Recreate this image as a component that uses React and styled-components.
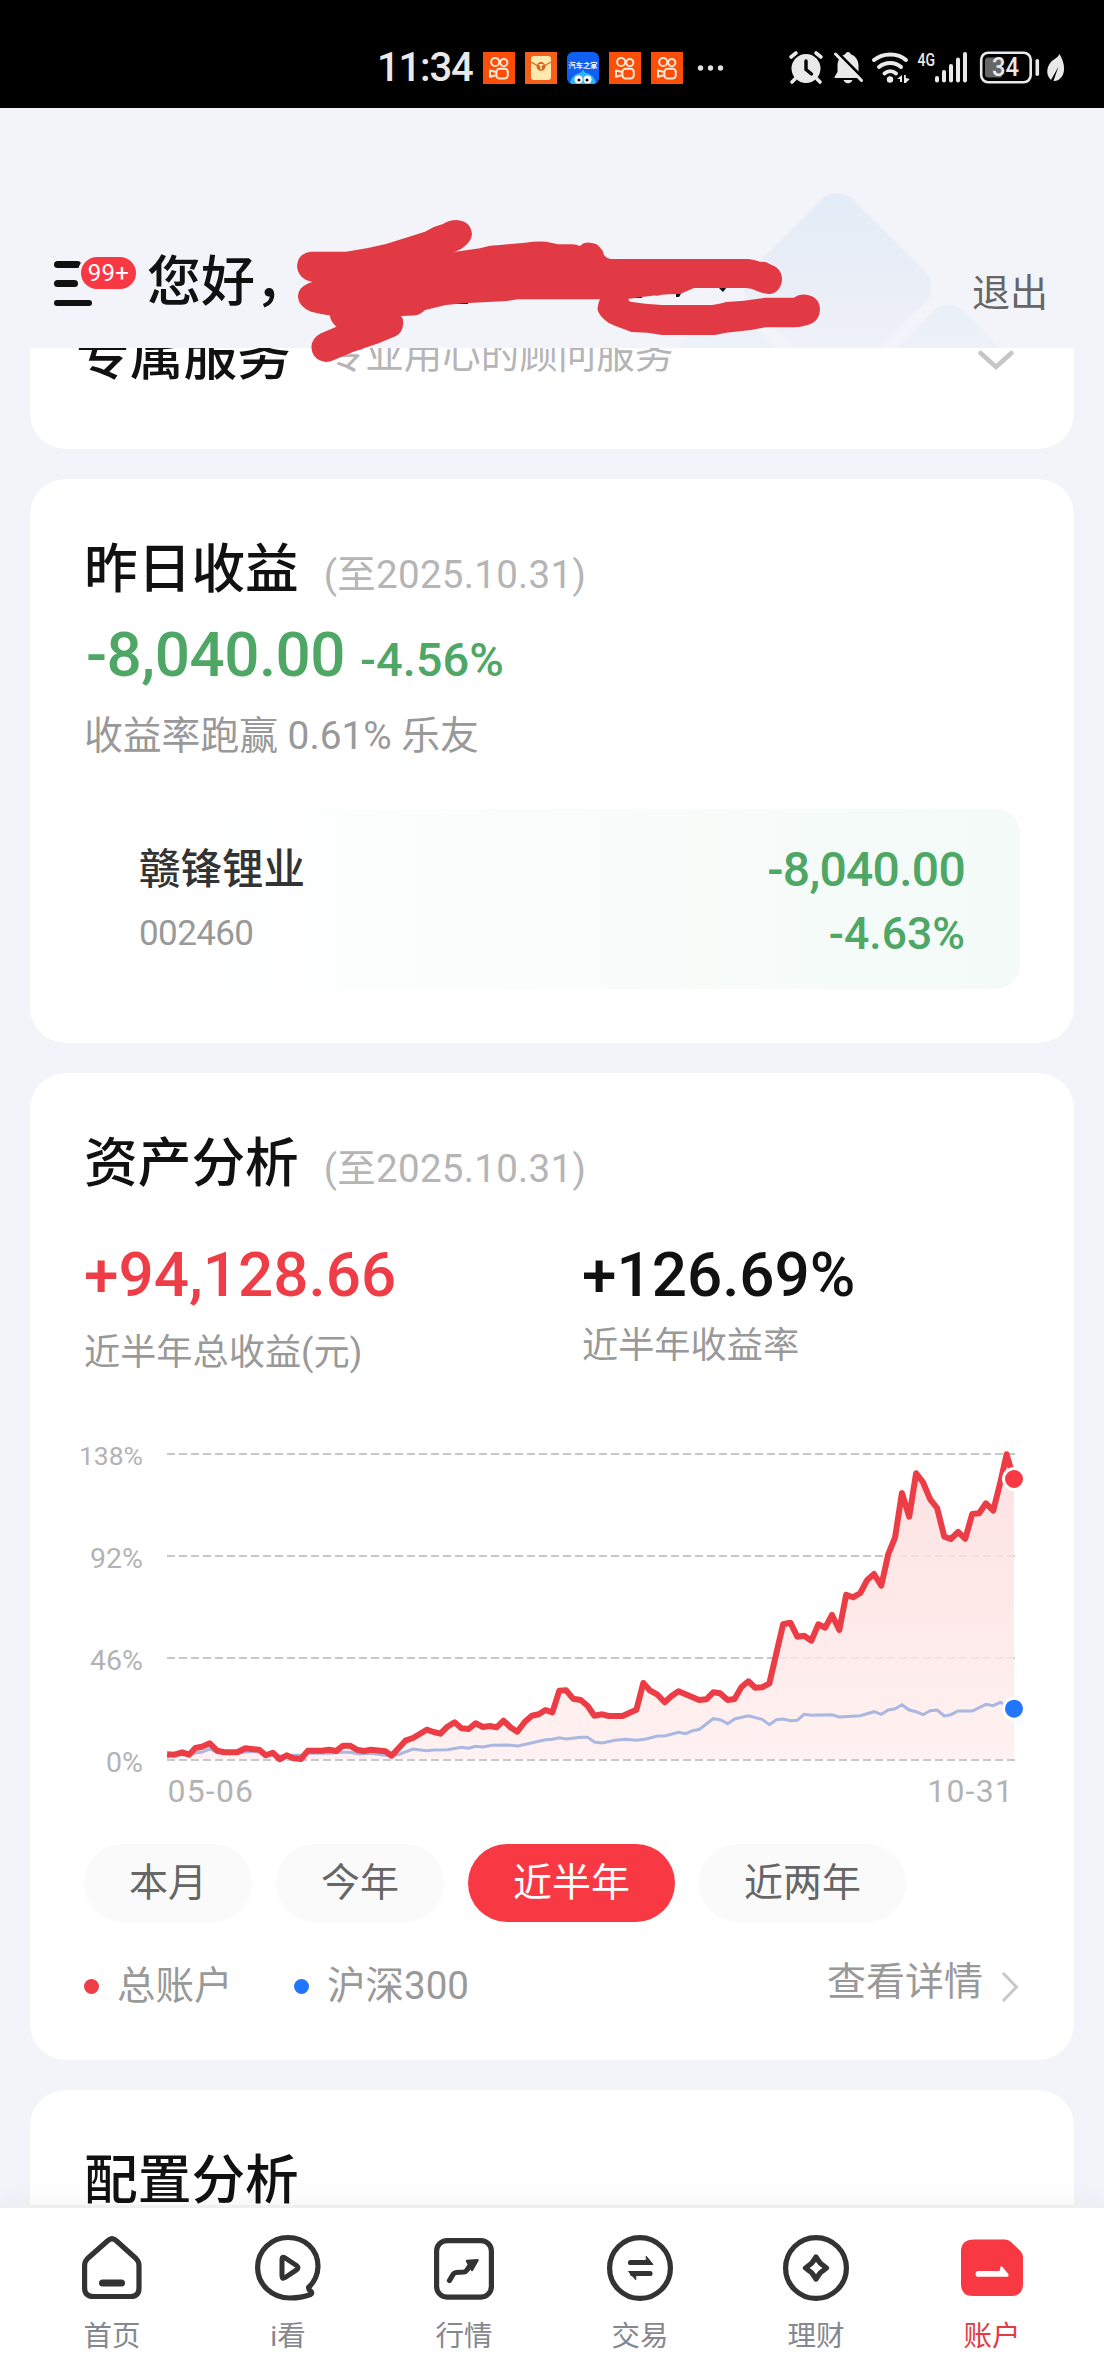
import React from "react";
import styled, { createGlobalStyle } from "styled-components";

const GlobalStyle = createGlobalStyle`
  html, body { margin: 0; padding: 0; background: #f3f4f9; }
  * { box-sizing: border-box; }
  body { font-family: Roboto, "Noto Sans CJK SC", sans-serif; }
  svg { display: block; flex: none; overflow: visible; }
`;

const Screen = styled.div`
  width: 1104px;
  height: 2376px;
  display: flex;
  flex-direction: column;
  overflow: hidden;
  background: #f3f4f9;
`;

/* ---------- status bar ---------- */

const StatusBar = styled.div`
  height: 108px;
  flex: none;
  display: flex;
  justify-content: space-between;
  padding: 51px 38px 0 377px;
  background: #000;
  color: #e9e9e9;
`;

const StatusGroup = styled.div`
  display: flex;
  height: 33px;
  align-items: center;
  gap: 10px;
`;

const Clock = styled.span`
  width: 96px;
  font-size: 40px;
  font-weight: 500;
  line-height: 34px;
  letter-spacing: -1.200px;
  white-space: nowrap;
`;

function KuaiIcon() {
  return (
    <svg width="32" height="32" viewBox="0 0 32 32" fill="none" stroke="#ffe9d6" strokeWidth="2">
      <rect width="32" height="32" fill="#fb4e08" stroke="none" />
      <circle cx="12.2" cy="10" r="4.1" />
      <circle cx="20.8" cy="10.6" r="3.6" />
      <rect x="13.4" y="16.8" width="11.4" height="9.6" rx="3.2" />
      <path d="M13 20 7 18.400v6.400l6-1.600" strokeLinejoin="round" />
    </svg>
  );
}

function EnvelopeIcon() {
  return (
    <svg width="32" height="32" viewBox="0 0 32 32">
      <rect width="32" height="32" fill="#f4601a" />
      <rect x="6" y="4" width="20" height="24" rx="3" fill="#ffe9ae" />
      <path d="M6 10l7 4M26 10l-7 4" stroke="#d8601c" strokeWidth="1.2" />
      <circle cx="16" cy="14.5" r="4.4" fill="#d9641f" />
      <path d="M13.8 12.8h4.4M16 12.8v4.6" stroke="#ffe9ae" strokeWidth="1.4" />
    </svg>
  );
}

function AutoHomeIcon() {
  return (
    <svg width="32" height="32" viewBox="0 0 32 32">
      <defs>
        <clipPath id="autoClip"><rect width="32" height="32" rx="6" /></clipPath>
      </defs>
      <g clipPath="url(#autoClip)">
        <rect width="32" height="32" fill="#0f5ff0" />
        <path d="M3 32c1-8 6-10 11-11.500l2-3 2 3c5 1.500 10 3.500 11 11.500z" fill="#2fb4f5" />
        <circle cx="11.500" cy="27.500" r="4" fill="#fff" />
        <circle cx="20.500" cy="27.500" r="4" fill="#fff" />
        <circle cx="12" cy="28" r="1.600" fill="#111" />
        <circle cx="20" cy="28" r="1.600" fill="#111" />
      </g>
      <text x="16" y="15.500" textAnchor="middle" fontSize="7.200" fontWeight="700" fill="#fff">汽车之家</text>
    </svg>
  );
}

const MoreDotsIcon = styled.svg`
  margin-left: 4px;
`;

function MoreDots() {
  return (
    <MoreDotsIcon width="26" height="32" viewBox="0 0 26 32" fill="#e0e0e0">
      <circle cx="3.500" cy="16" r="2.700" /><circle cx="13.500" cy="16" r="2.700" /><circle cx="23.500" cy="16" r="2.700" />
    </MoreDotsIcon>
  );
}

function SystemIcons() {
  return (
    <svg width="278" height="34" viewBox="788 51 278 34" fill="#e9e9e9">
      <circle cx="806" cy="68.500" r="14.500" />
      <path d="M791 57l5-4M821 57l-5-4M795 79l-3 3M817 79l3 3" stroke="#e9e9e9" strokeWidth="3.600" strokeLinecap="round" />
      <path d="M806 61v8.500l5.500 4.500" fill="none" stroke="#000" strokeWidth="3.400" strokeLinecap="round" />
      <path d="M848 52c1.500 0 2.500 1 2.800 2.300 4.500 1.500 7.400 5.500 7.700 10.700v7l3 5v1h-27v-1l3-5v-7c.3-5.200 3.200-9.200 7.700-10.700.3-1.300 1.300-2.300 2.800-2.300z" />
      <path d="M843.500 80h9c-.6 2-2.300 3.200-4.500 3.200s-3.900-1.200-4.500-3.200z" />
      <path d="M837.500 52.500l27 27" stroke="#000" strokeWidth="3" />
      <path d="M835.500 54l26 26.500" stroke="#e9e9e9" strokeWidth="3" strokeLinecap="round" />
      <g fill="none" stroke="#e9e9e9" strokeWidth="4" strokeLinecap="round">
        <path d="M874 60c9-7.500 24-7.500 32 0" />
        <path d="M879 67c6-5.500 16.500-5.500 22 0" />
        <path d="M884.500 73.500c3.500-3 8-3 11.500 0" />
      </g>
      <circle cx="890" cy="79.500" r="3.200" />
      <path d="M902 75v7h-2v-3h-3zM904 75h1.800v3l4 1-4 4h-1.800z" />
      <text x="917.500" y="65.800" fontSize="19" fontWeight="500" textLength="17.500" lengthAdjust="spacingAndGlyphs">4G</text>
      <rect x="935" y="76" width="4" height="6.500" rx="2" />
      <rect x="942" y="70" width="4" height="12.500" rx="2" />
      <rect x="949" y="64" width="4" height="18.500" rx="2" />
      <rect x="956" y="57.500" width="4" height="25" rx="2" />
      <rect x="963" y="52" width="4" height="30.500" rx="2" />
      <rect x="981.200" y="52.700" width="49.500" height="29.600" rx="7" fill="none" stroke="#e9e9e9" strokeWidth="2.600" />
      <path d="M988 57.500h13.500v20H988a3 3 0 0 1-3-3v-14a3 3 0 0 1 3-3z" fill="#666" />
      <text x="1005.500" y="76" textAnchor="middle" fontSize="25" fontWeight="500" textLength="27" lengthAdjust="spacingAndGlyphs">34</text>
      <rect x="1035.500" y="59" width="3.600" height="17" rx="1.800" />
      <path d="M1059.500 54c5.500 9 7 20.500-.5 25.500-2 1.400-4 1.600-5.500 1.200l5-14.200-7.500 13.500c-6.500-6-3.500-15.500 1.500-19.500 2.500-2 5.500-3 7-6.500z" />
    </svg>
  );
}

/* ---------- header ---------- */

const Header = styled.header`
  position: relative;
  z-index: 2;
  height: 240px;
  flex: none;
  display: flex;
  align-items: flex-start;
  padding: 140px 56px 0 54px;
`;

const HeaderBackdrop = styled.svg`
  position: absolute;
  left: 640px;
  top: 60px;
  overflow: hidden;
`;

const Scribble = styled.svg`
  position: absolute;
  left: 290px;
  top: 102px;
`;

const MenuButton = styled.div`
  position: relative;
  width: 93px;
  height: 50px;
  margin-top: 9px;
`;

const MenuBar = styled.div`
  width: ${(p) => p.$w}px;
  height: 6.500px;
  margin-top: ${(p) => p.$top}px;
  border-radius: 4px;
  background: #111;
`;

const Badge = styled.span`
  position: absolute;
  left: 24px;
  top: -3px;
  width: 61px;
  height: 38px;
  border: 3px solid #f3f4f9;
  border-radius: 19px;
  background: #f83842;
  color: #fff;
  font-size: 24px;
  line-height: 33px;
  letter-spacing: 0.3px;
  text-align: center;
`;

const Greeting = styled.h1`
  margin: 0 auto 0 0;
  position: relative;
  font-size: 54px;
  line-height: 70px;
  font-weight: 500;
  color: #111;
`;

const Logout = styled.span`
  position: relative;
  margin-top: 20px;
  font-size: 38px;
  line-height: 50px;
  color: #666;
`;

/* ---------- cards ---------- */

const Main = styled.main`
  flex: 1;
  min-height: 0;
  overflow: hidden;
  display: flex;
  flex-direction: column;
  gap: 30px;
  padding: 0 30px;
`;

const Card = styled.section`
  flex: none;
  height: ${(p) => p.$h}px;
  padding: ${(p) => (p.$cut ? "0 60px 0 46px" : "55px 54px 0")};
  border-radius: ${(p) => (p.$cut ? "0 0 36px 36px" : "36px")};
  background: #fff;
  overflow: hidden;
`;

const ServiceRow = styled.div`
  display: flex;
  align-items: flex-start;
  margin-top: -27px;

  svg { margin-top: 29px; }
`;

const TitleRow = styled.div`
  display: flex;
  align-items: baseline;
  height: 72px;
`;

const Title = styled.h2`
  margin: 0;
  font-size: 53.700px;
  line-height: 72px;
  font-weight: 500;
  color: #111;
  white-space: nowrap;
`;

const TitleDate = styled.span`
  margin-left: 25px;
  font-size: 38.500px;
  line-height: 50px;
  letter-spacing: 0.300px;
  color: #b5b5b5;
  white-space: nowrap;
`;

const ServiceNote = styled.span`
  margin: 9px auto 0 36px;
  font-size: 38.500px;
  line-height: 50px;
  color: #b5b5b5;
`;

const Figure = styled.span`
  font-size: ${(p) => p.$size}px;
  line-height: ${(p) => p.$line || 72}px;
  letter-spacing: ${(p) => p.$track || 0}px;
  color: ${(p) => p.$color};
  font-weight: ${(p) => p.$weight || 500};
  white-space: nowrap;
`;

const FigureRow = styled.div`
  display: flex;
  align-items: baseline;
  gap: 15px;
  height: 72px;
  margin: 13px 0 0 2px;
`;

const Caption = styled.p`
  margin: ${(p) => p.$top}px 0 0;
  font-size: ${(p) => p.$size}px;
  line-height: ${(p) => p.$line}px;
  color: #999;
  white-space: nowrap;
`;

const HoldingBox = styled.div`
  display: flex;
  justify-content: space-between;
  height: 180px;
  margin-top: 48px;
  padding: 33px 55px 0 55px;
  border-radius: 24px;
  background: linear-gradient(90deg, #fff 8%, #f9fdfb 50%, #f3faf7 100%);
`;

const HoldingColumn = styled.div`
  display: flex;
  flex-direction: column;
  align-items: ${(p) => p.$align};
  gap: 12px;
`;

const SummaryRow = styled.div`
  display: flex;
  height: 138px;
  margin-top: 39px;
`;

const SummaryItem = styled.div`
  width: 498px;
  flex: none;
  display: flex;
  flex-direction: column;
`;

const Chart = styled.svg`
  margin: 43px 0 0 -54px;
`;

const PillRow = styled.div`
  display: flex;
  gap: 24px;
  margin-top: 34px;
`;

const Pill = styled.button`
  height: 78px;
  padding: 0 45px;
  border: 0;
  border-radius: 39px;
  font-family: inherit;
  font-size: 39px;
  line-height: 76px;
  white-space: nowrap;
  background: ${(p) => (p.$active ? "#f83842" : "#fafafa")};
  color: ${(p) => (p.$active ? "#fff" : "#666")};
`;

const LegendRow = styled.div`
  display: flex;
  align-items: center;
  height: 50px;
  margin-top: 39px;
  font-size: 38.500px;
  line-height: 50px;
  color: #999;
`;

const LegendItem = styled.span`
  display: flex;
  align-items: center;
  gap: 18px;
  width: ${(p) => p.$w}px;
  white-space: nowrap;
`;

const Dot = styled.i`
  width: 15px;
  height: 15px;
  border-radius: 50%;
  background: ${(p) => p.$color};
`;

const DetailLink = styled.span`
  display: flex;
  align-items: center;
  gap: 18px;
  height: 50px;
  margin: -8px 1px 0 auto;
  font-size: 39px;
  white-space: nowrap;
  svg { margin-top: 9px; }
`;

/* ---------- tab bar ---------- */

const TabBar = styled.nav`
  position: relative;
  z-index: 3;
  flex: none;
  display: flex;
  height: 171px;
  padding: 24px 24px 0;
  border-top: 3px solid #efefef;
  background: #fff;
  box-shadow: 0 -6px 24px rgba(20, 30, 60, 0.04);
`;

const Tab = styled.div`
  flex: 1;
  display: flex;
  flex-direction: column;
  align-items: center;
  font-size: 28.500px;
  line-height: 40px;
  color: ${(p) => (p.$active ? "#e23b45" : "#85888f")};
  svg { margin-bottom: 11px; }
`;

const iconProps = {
  width: 72,
  height: 74,
  viewBox: "0 0 72 74",
  fill: "none",
  stroke: "#333",
  strokeWidth: 5.2,
  strokeLinejoin: "round",
  strokeLinecap: "round",
};

const tabs = [
  {
    label: "首页",
    icon: (
      <svg {...iconProps}>
        <path d="M32 8.500q4-3.500 8 0L60 26.500q3 3 3 7V56q0 8.500-8.500 8.500h-37Q8.600 64.500 8.600 56V33.500q0-4 3-7z" />
        <path d="M26.500 51h19" strokeWidth="7" />
      </svg>
    ),
  },
  {
    label: "i看",
    icon: (
      <svg {...iconProps}>
        <path d="M56.500 55.500A30 30 0 0 0 66 34.500C66 17 52.500 5.500 36 5.500S5.600 18.500 5.600 35.500 20 66 38 66c8 0 14-1 20.500-3.500q2.500-1.500 0-3.500-2-1.500-2-3.500z" />
        <path d="M30 27.500q0-3.500 3.200-1.500L44.500 33.500q3 2.200 0 4.400L33.200 45.500Q30 47.500 30 44z" strokeWidth="5" />
      </svg>
    ),
  },
  {
    label: "行情",
    icon: (
      <svg {...iconProps}>
        <rect x="8.600" y="8.600" width="54.800" height="56.500" rx="10.500" />
        <path d="M21.500 48.500l3.500-6q1.200-1.800 3.200-2l7.500-.5q2.200-.2 3.300-2l4.500-6.500" />
        <path d="M39 29l10.500-.8L44 38z" fill="#333" strokeWidth="2.500" />
      </svg>
    ),
  },
  {
    label: "交易",
    icon: (
      <svg {...iconProps}>
        <circle cx="36" cy="36" r="30.400" />
        <path d="M26.500 30.500H44M28.500 41.500H46" />
        <path d="M42.500 24.500l6.500 8h-6.500zM31.500 47.500l-7-8h7z" fill="#333" strokeWidth="1" />
      </svg>
    ),
  },
  {
    label: "理财",
    icon: (
      <svg {...iconProps}>
        <circle cx="36" cy="36" r="30.400" />
        <path d="M36 25l3.200 4.800q1 1.500 2.500 2.500l4.800 3.700-4.800 3.700q-1.500 1-2.500 2.500l-3.200 4.800-3.200-4.800q-1-1.500-2.500-2.500l-4.800-3.700 4.800-3.700q1.500-1 2.500-2.500z" />
      </svg>
    ),
  },
  {
    label: "账户",
    active: true,
    icon: (
      <svg {...iconProps} stroke="none">
        <path d="M18 7.500h31q3.500 0 6 2.500l9 8.500q3 3 3 7V52q0 12-12 12H17Q5 64 5 52V19.500q0-12 13-12z" fill="#f83842" />
        <path d="M22.500 39H43.500l1-4q.5-1.500 1.800-.3l6 7.300q1 2.500-1.300 2.800H22.500a2.900 2.900 0 0 1 0-5.800z" fill="#fff" />
      </svg>
    ),
  },
];

/* ---------- chart ---------- */

const accountSeries = [
  [311,1003],[332,1004],[355,997],[375,1004],[393,984],[412,980],[435,970],[456,992],[478,997],[515,997],
  [538,985],[578,989],[598,1006],[618,998],[638,1018],[658,1006],[678,1015],[700,1017],[720,992],[760,992],
  [782,989],[802,993],[822,977],[842,977],[862,989],[882,993],[903,989],[945,994],[963,1007],[1003,962],
  [1025,954],[1065,929],[1085,936],[1105,941],[1125,920],[1146,907],[1166,925],[1187,927],[1207,910],[1228,921],
  [1248,918],[1268,922],[1288,902],[1310,923],[1328,935],[1350,905],[1370,887],[1390,883],[1410,870],[1430,877],
  [1450,812],[1470,811],[1490,836],[1512,840],[1532,857],[1552,887],[1574,883],[1594,888],[1634,888],[1654,878],
  [1674,869],[1694,789],[1714,812],[1735,824],[1756,847],[1776,828],[1796,814],[1856,840],[1877,838],[1897,817],
  [1917,820],[1939,840],[1959,837],[1979,801],[1999,784],[2019,803],[2039,802],[2060,790],[2100,613],[2121,608],
  [2141,650],[2161,647],[2182,662],[2202,613],[2222,623],[2242,585],[2263,630],[2283,524],[2303,532],[2324,519],
  [2344,480],[2364,462],[2385,497],[2405,403],[2425,352],[2445,219],[2466,290],[2486,160],[2506,186],[2527,238],
  [2547,264],[2568,350],[2587,357],[2608,336],[2629,356],[2649,282],[2669,280],[2689,250],[2710,272],[2730,190],
  [2749,103],[2770,177],
];

const indexSeries = [
  [311,1012],[332,1004],[375,1004],[395,998],[410,997],[435,987],[456,996],[515,998],[578,993],[598,1003],[640,1008],
  [680,1006],[700,1006],[720,1000],[782,1000],[822,997],[842,997],[870,1002],[903,1000],[960,1008],[985,1003],
  [1025,987],[1065,992],[1085,990],[1125,989],[1166,982],[1187,985],[1207,979],[1228,981],[1255,976],[1300,975],
  [1330,978],[1410,959],[1430,958],[1450,953],[1470,957],[1512,952],[1532,952],[1552,966],[1574,969],[1612,961],
  [1642,958],[1674,961],[1702,957],[1735,948],[1756,948],[1796,937],[1817,941],[1837,932],[1857,928],[1897,896],
  [1917,899],[1939,911],[1959,897],[1999,887],[2039,898],[2060,914],[2080,899],[2100,897],[2121,902],[2141,901],
  [2161,883],[2182,886],[2242,884],[2263,891],[2324,887],[2364,875],[2385,883],[2405,870],[2425,866],[2445,854],
  [2466,870],[2486,875],[2506,884],[2527,872],[2547,870],[2568,888],[2587,884],[2608,873],[2649,873],[2689,853],
  [2710,857],[2730,847],[2749,855],[2770,866],
];

const toPoints = (series) =>
  series.map(([u, v]) => `${(30 + u / 2.904).toFixed(1)},${(v / 3).toFixed(1)}`).join(" ");

const gridLines = [
  { y: 34, label: "138%", size: 26.5 },
  { y: 136, label: "92%", size: 28.5 },
  { y: 238, label: "46%", size: 28.5 },
  { y: 340, label: "0%", size: 28.5 },
];

function ReturnChart() {
  const line = toPoints(accountSeries);
  return (
    <Chart width="1044" height="390" viewBox="0 0 1044 390">
      <defs>
        <linearGradient id="fall" x1="0" y1="34" x2="0" y2="340" gradientUnits="userSpaceOnUse">
          <stop offset="0" stopColor="#fddcdd" stopOpacity=".85" />
          <stop offset=".5" stopColor="#fee4e4" stopOpacity=".8" />
          <stop offset="1" stopColor="#ffeeee" stopOpacity=".8" />
        </linearGradient>
      </defs>
      {gridLines.map((g) => (
        <g key={g.label}>
          <path d={`M137 ${g.y}H985`} stroke="#c8c8c8" strokeWidth="2" strokeDasharray="8 4" />
          <text x="113" y={g.y + 1.5 + g.size * 0.355} textAnchor="end" fontSize={g.size} fill="#b3b3b3">{g.label}</text>
        </g>
      ))}
      <polygon points={`137,339 ${line} 984,339`} fill="url(#fall)" />
      <polyline points={toPoints(indexSeries)} fill="none" stroke="#aab7e0" strokeWidth="3" />
      <polyline points={line} fill="none" stroke="#ec3d46" strokeWidth="6" strokeLinejoin="round" />
      <circle cx="984" cy="59" r="10.500" fill="#f83842" stroke="#fff" strokeWidth="3" />
      <circle cx="984" cy="288.700" r="10.500" fill="#2376fb" stroke="#fff" strokeWidth="3" />
      <text x="137.500" y="381.500" fontSize="32" letterSpacing="1.2" fill="#b3b3b3">05-06</text>
      <text x="984" y="381.500" fontSize="32" letterSpacing="1.2" textAnchor="end" fill="#b3b3b3">10-31</text>
    </Chart>
  );
}

export default function App() {
  return (
    <Screen>
      <GlobalStyle />
      <StatusBar>
        <StatusGroup>
          <Clock>11:34</Clock>
          <KuaiIcon />
          <EnvelopeIcon />
          <AutoHomeIcon />
          <KuaiIcon />
          <KuaiIcon />
          <MoreDots />
        </StatusGroup>
        <SystemIcons />
      </StatusBar>

      <Header>
        <HeaderBackdrop width="400" height="180" viewBox="640 168 400 180">
          <defs>
            <linearGradient id="tile" x1="0" y1="0" x2="1" y2="1">
              <stop offset="0" stopColor="#e3edf7" />
              <stop offset=".5" stopColor="#eaeef7" />
              <stop offset="1" stopColor="#f2f4f9" />
            </linearGradient>
            <linearGradient id="tileSoft" x1="0" y1="0" x2="1" y2="1">
              <stop offset="0" stopColor="#e9eff8" />
              <stop offset=".4" stopColor="#f0f3f7" />
            </linearGradient>
          </defs>
          <rect x="-73" y="-73" width="146" height="146" rx="22" fill="url(#tile)" transform="translate(837.500 287) rotate(45)" />
          <rect x="-73" y="-73" width="146" height="146" rx="22" fill="url(#tileSoft)" transform="translate(949 399) rotate(45)" />
          <rect x="-73" y="-73" width="146" height="146" rx="22" fill="url(#tileSoft)" transform="translate(726 402) rotate(45)" />
        </HeaderBackdrop>
        <MenuButton>
          <MenuBar $w={27} $top={4} />
          <MenuBar $w={24} $top={12.5} />
          <MenuBar $w={38} $top={13} />
          <Badge>99+</Badge>
        </MenuButton>
        <Greeting>您好，</Greeting>
        <Logout>退出</Logout>
        <Scribble width="540" height="160" viewBox="290 210 540 160">
          <path d="M314 281h23v3h-23zM448 301h20v3h-20zM628 295h14v3h-14zM651 293q7 5 11 0zM676 292h6l-3 5h-3zM718 287h9l-4 5z" fill="#111" />
          <path
            d="M297 266Q298 253 311 251.700L346 251.700Q366 249 386 244L425 231.700Q434 226 443 224Q449 220 456.400 220Q471 221 472 234.300Q471 242 464 246.700Q459 251 452 252.300L480 248.300Q490 245 500 245L525 242.700Q536 241 546.400 241.700L558 244.300H571Q576 244 580 246Q584 242 590 242.700Q597 243 599.500 247Q603 250 604 255Q607 259 612 259H749Q756 260 760 261.700L765.500 262L776 267Q782 272 782 279Q782 285 778 290Q773 295 767 293.700Q761 293 756.500 290.700Q751 288 746 288H694L680 294Q669 294 658 295L640 297.300L628 299L630 301.700Q645 304 662 305H712Q720 304 726 302L744 300.700L765.500 297.700H794Q799 294 806.500 294.700Q820 297 820 310Q819 320 812 323.300Q804 327 794 327.300H765.500L751 330L726 332.700L715 335H662L647.500 332.700L631.500 332L615.500 326Q607 323 603 318.300Q597 312 597.600 308Q598 303 600 299.300H518L507 301L464 303.300L446 305L425 310Q420 315 414 315.500L401 316Q404 319 403 325Q402 333 396 336L378.600 343.300L353.600 351.700L334 360Q330 362 325.700 362Q312 360 311.400 346.700Q312 338 321 333.300L336.400 326.700Q330 321 330 315.500Q320 314 311 311.700Q298 306 298 296.700Q298 286 312.500 282Q298 279 297 266Z"
            fill="#e23a45"
          />
        </Scribble>
      </Header>

      <Main>
        <Card $h={101} $cut>
          <ServiceRow>
            <Title>专属服务</Title>
            <ServiceNote>专业用心的顾问服务</ServiceNote>
            <svg width="36" height="20" viewBox="0 0 36 20" fill="none" stroke="#c6c6c6" strokeWidth="4.500">
              <path d="M2.500 3L18 17l15.500-14" strokeLinecap="round" />
            </svg>
          </ServiceRow>
        </Card>

        <Card $h={564}>
          <TitleRow>
            <Title>昨日收益</Title>
            <TitleDate>(至2025.10.31)</TitleDate>
          </TitleRow>
          <FigureRow>
            <Figure $size={62} $color="#4fa766" $track={-0.5}>-8,040.00</Figure>
            <Figure $size={47} $color="#4fa766">-4.56%</Figure>
          </FigureRow>
          <Caption $top={20} $size={38.8} $line={50}>收益率跑赢 0.61% 乐友</Caption>
          <HoldingBox>
            <HoldingColumn $align="flex-start">
              <Figure $size={41.5} $line={56} $color="#333">赣锋锂业</Figure>
              <Figure $size={35} $line={48} $color="#999" $track={-0.6} $weight={400}>002460</Figure>
            </HoldingColumn>
            <HoldingColumn $align="flex-end">
              <Figure $size={48} $line={56} $color="#4fa766" $track={-0.7}>-8,040.00</Figure>
              <Figure $size={44.5} $line={48} $color="#4fa766">-4.63%</Figure>
            </HoldingColumn>
          </HoldingBox>
        </Card>

        <Card $h={987}>
          <TitleRow>
            <Title>资产分析</Title>
            <TitleDate>(至2025.10.31)</TitleDate>
          </TitleRow>
          <SummaryRow>
            <SummaryItem>
              <Figure $size={62} $color="#ee3d47">+94,128.66</Figure>
              <Caption $top={18} $size={36.2} $line={48}>近半年总收益(元)</Caption>
            </SummaryItem>
            <SummaryItem>
              <Figure $size={62} $color="#111">+126.69%</Figure>
              <Caption $top={11} $size={36.2} $line={48}>近半年收益率</Caption>
            </SummaryItem>
          </SummaryRow>
          <ReturnChart />
          <PillRow>
            <Pill>本月</Pill>
            <Pill>今年</Pill>
            <Pill $active>近半年</Pill>
            <Pill>近两年</Pill>
          </PillRow>
          <LegendRow>
            <LegendItem $w={210}><Dot $color="#ee3d47" />总账户</LegendItem>
            <LegendItem $w={200}><Dot $color="#2376fb" />沪深300</LegendItem>
            <DetailLink>
              查看详情
              <svg width="18" height="32" viewBox="0 0 18 32" fill="none" stroke="#c8c8c8" strokeWidth="3">
                <path d="M2 2l13.500 14L2 30" />
              </svg>
            </DetailLink>
          </LegendRow>
        </Card>

        <Card $h={200}>
          <Title>配置分析</Title>
        </Card>
      </Main>

      <TabBar>
        {tabs.map((t) => (
          <Tab key={t.label} $active={t.active}>
            {t.icon}
            {t.label}
          </Tab>
        ))}
      </TabBar>
    </Screen>
  );
}
